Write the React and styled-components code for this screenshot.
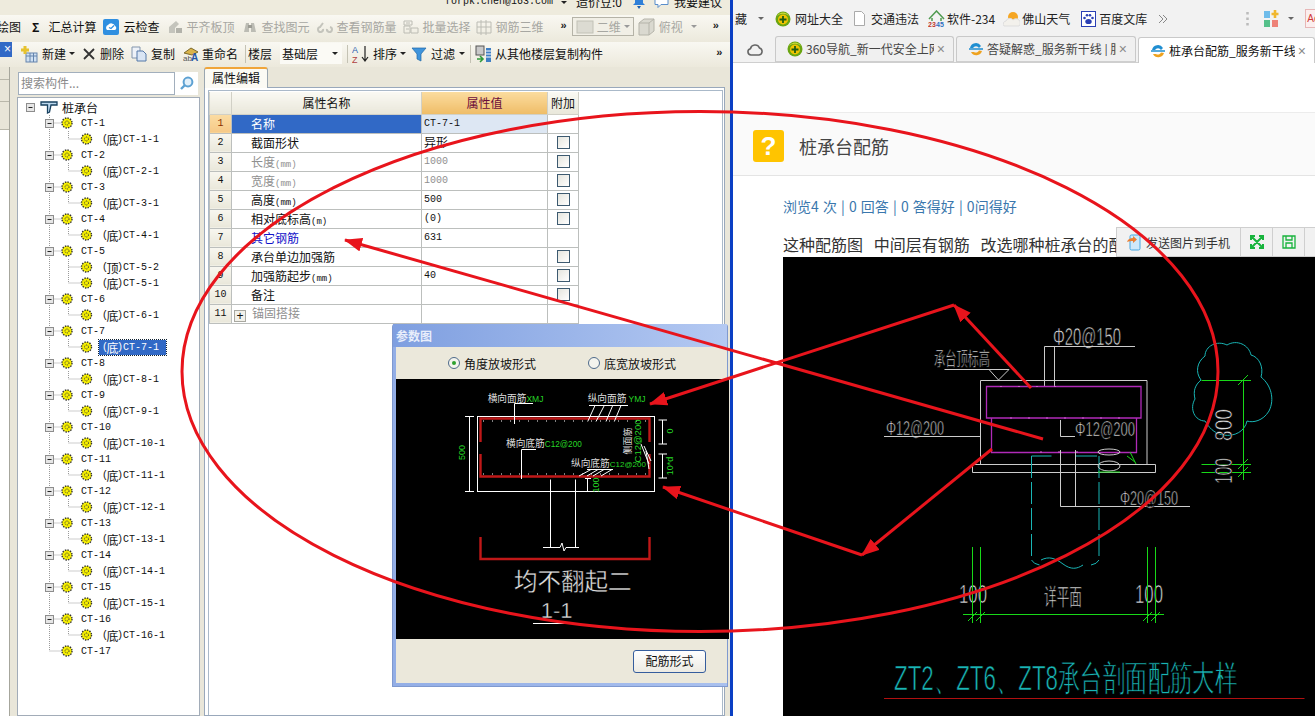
import React from "react";
import styled, { createGlobalStyle } from "styled-components";

const CJK = `"Noto Sans CJK SC", "Liberation Sans", sans-serif`;
const MONO = `"Liberation Mono", "Noto Sans CJK SC", monospace`;

const Global = createGlobalStyle`
  html, body { margin: 0; padding: 0; width: 1315px; height: 716px; overflow: hidden; background: #fff; }
  body { font-family: ${CJK}; font-size: 12px; color: #111; }
  * { box-sizing: border-box; }
`;

const Screen = styled.div`
  position: relative; display: flex; width: 1315px; height: 716px; overflow: hidden;
`;

/* ---------- left application ---------- */
const AppWin = styled.div`
  position: relative; width: 730px; flex: none; display: flex; flex-direction: column;
  background: #e9e6d9; overflow: hidden;
`;
const TopStrip = styled.div`
  height: 15px; flex: none; display: flex; align-items: center; padding: 0 0 11px 445px;
  background: #eeebdd; overflow: hidden; line-height: 12px; white-space: nowrap;
`;
const Mono = styled.span`
  font-family: ${MONO}; font-size: ${p => p.$size || 10}px; line-height: 1;
`;
const Bar = styled.div`
  display: flex; align-items: center; flex: none; white-space: nowrap; overflow: hidden;
  height: ${p => p.$h}px; padding-bottom: ${p => p.$pb || 0}px; background: linear-gradient(#f9f8f2, #ece9dc);
`;
const Item = styled.span`
  display: inline-flex; align-items: center; gap: ${p => p.$gap ?? 4}px; flex: none;
  margin-left: ${p => p.$ml || 0}px; line-height: 14px;
  color: ${p => (p.$off ? "#a7a7a2" : "#111")};
`;
const Sep = styled.span`
  width: 1px; height: 18px; flex: none; background: #c4c2b4; margin-left: ${p => p.$ml || 0}px;
`;
const Caret = styled.span`
  flex: none; width: 0; height: 0; margin-left: ${p => p.$ml || 0}px;
  border-left: 3px solid transparent; border-right: 3px solid transparent;
  border-top: 3px solid ${p => p.$c || "#222"};
`;
const Chevrons = styled.span`
  flex: none; margin-left: ${p => p.$ml || 0}px; font: bold 11px/12px "Liberation Sans", sans-serif;
  color: #222; margin-top: -4px;
`;
const ViewSelect = styled.span`
  flex: none; display: inline-flex; align-items: center; gap: 3px; width: 62px; height: 19px;
  margin-left: ${p => p.$ml}px; padding-left: 3px; border: 1px solid #b5b3a7; color: #a7a7a2;
  background: #f1efe6;
`;
const FloorSelect = styled.span`
  flex: none; display: inline-flex; align-items: center; justify-content: space-between;
  width: 62px; height: 21px; margin-left: ${p => p.$ml}px; padding: 0 4px 0 2px; background: #fbfaf5;
`;
const AppBody = styled.div`
  flex: 1; min-height: 0; display: flex;
`;
const Stub = styled.div`
  width: 10px; flex: none; display: flex; flex-direction: column; background: #fff;
  border-right: 1px solid #a6a69c;
`;
const CloseTab = styled.div`
  width: 12px; height: 15px; flex: none; align-self: flex-start; background: #3169c6; color: #fff;
  font: 12px/15px "Liberation Sans", sans-serif; text-align: right; padding-right: 1px; overflow: hidden;
`;
const StubTab = styled.div`
  height: ${p => p.$h}px; background: #e8e5d8; border-bottom: 1px solid #b9b7aa;
`;
const TreePane = styled.div`
  width: 183px; margin-left: 7px; flex: none; display: flex; flex-direction: column; gap: 2px; padding-top: 5px;
`;
const SearchRow = styled.div`
  height: 23px; flex: none; display: flex; margin-left: 1px; width: 180px; background: #fff;
`;
const SearchBox = styled.div`
  flex: 1; border: 1px solid #a2afbd; padding-left: 2px; color: #8a8a8a; font-size: 12px; line-height: 20px;
`;
const SearchBtn = styled.div`
  width: 23px; flex: none; display: flex; align-items: center; justify-content: center;
`;
const TreeBox = styled.div`
  flex: 1; background: #fff; border: 1px solid #a2acb8; padding-top: 1px; overflow: hidden;
`;
const TreeRow = styled.div`
  height: 16px; display: flex; align-items: center; white-space: nowrap; line-height: 16px;
`;
const TreeLabel = styled.span`
  display: inline-flex; align-items: center; height: 15px; padding: 1px ${p => (p.$sel ? 7 : 3)}px 0 3px;
  font-family: ${MONO}; font-size: 10px;
  color: ${p => (p.$sel ? "#fff" : "#111")};
  background: ${p => (p.$sel ? "#3169c6" : "transparent")};
  outline: ${p => (p.$sel ? "1px dotted #123" : "none")};
`;
const Zh = styled.span`
  font-family: ${CJK}; font-size: 12px; line-height: 15px;
`;
const TightZh = styled(Zh)`
  margin: -1px -1.5px 0;
`;
const RightPane = styled.div`
  flex: 1; min-width: 0; display: flex; flex-direction: column; padding: 0 5px 0 4px;
`;
const EditTab = styled.div`
  width: 64px; height: 21px; flex: none; margin-bottom: -1px; z-index: 1;
  border: 1px solid #9aa6b0; border-top: 2px solid #f0a53a; border-bottom: 0; border-radius: 3px 3px 0 0;
  background: #fbfaf4; text-align: center; line-height: 18px;
`;
const Panel = styled.div`
  flex: 1; background: #fff; border: 1px solid #99a8bb; padding: 2px 1px 0 3px;
`;
const InnerFrame = styled.div`
  height: 100%; border: 1px solid #aab9c9; border-bottom: 0; padding-top: 1px;
`;
const PropTable = styled.table`
  border-collapse: collapse; table-layout: fixed; width: 369px;
`;
const Th = styled.th`
  height: 22px; padding: 0; font-weight: 400; font-size: 12px; line-height: 15px; text-align: center;
  width: ${p => p.$w}px; border: 1px solid #d1d0c6; border-top: 0;
  color: ${p => (p.$hot ? "#6b0d3a" : "#111")};
  background: ${p => (p.$hot ? "linear-gradient(#fbdc9f, #efbd68)" : "linear-gradient(#faf9f3, #e9e7da)")};
`;
const Td = styled.td`
  height: 19px; padding: 0; border: 1px solid #bcbfbd; overflow: hidden; white-space: nowrap; line-height: 15px;
`;
const NumCell = styled(Td)`
  text-align: center; font-family: ${MONO}; font-size: 10px;
  color: ${p => (p.$sel ? "#8a3000" : "#111")};
  background: ${p => (p.$sel ? "linear-gradient(#fbdca3, #f6c987)" : "linear-gradient(#f8f7f0, #e9e7da)")};
`;
const NameCell = styled(Td)`
  padding-left: ${p => (p.$plus ? 2 : 19)}px;
  color: ${p => p.$c};
  background: ${p => (p.$sel ? "#3169c6" : "#fff")};
`;
const ValCell = styled(Td)`
  padding-left: 2px; font-family: ${MONO}; font-size: 10px; color: ${p => p.$c};
  background: ${p => (p.$sel ? "#dde7f3" : "#fff")};
`;
const ExtraCell = styled(Td)`
  line-height: 0;
`;
const Check = styled.span`
  display: block; width: 13px; height: 13px; margin: 0 auto 0 9px;
  border: 1px solid #3d5a70; background: linear-gradient(135deg, #e5e5de, #fff);
`;
const PlusBox = styled.span`
  display: inline-flex; align-items: center; justify-content: center; width: 12px; height: 12px;
  margin-right: 6px; vertical-align: -2px; border: 1px solid #a8a8a0; background: #f2f1ea;
  color: #111; font: 12px/10px "Liberation Sans", sans-serif;
`;

/* ---------- dialog ---------- */
const Dialog = styled.div`
  position: absolute; left: 392px; top: 324px; width: 336px; height: 363px; display: flex;
  flex-direction: column; padding: 0 0 3px 3px; border-radius: 3px 3px 0 0;
  background: linear-gradient(90deg, #93aee6, #a9c0ee); border: 1px solid #7f99cf; border-top: 0;
`;
const DialogTitle = styled.div`
  height: 23px; flex: none; padding-top: 3px; color: #e8eefb; font-weight: 700; font-size: 12px; line-height: 18px;
  background: linear-gradient(90deg, #7f9fe0, #b4c9f2); margin: 0 0 0 -3px; padding-left: 3px;
`;
const RadioRow = styled.div`
  height: 32px; flex: none; display: flex; align-items: center; background: #ebe8db;
`;
const Radio = styled.span`
  display: inline-flex; align-items: center; gap: 4px; margin-left: ${p => p.$ml}px;
`;
const RadioDot = styled.span`
  width: 12px; height: 12px; border-radius: 50%; border: 1px solid #4e6a8a; display: flex;
  align-items: center; justify-content: center; background: #f4f4ee;
  &::after { content: ""; width: 4px; height: 4px; border-radius: 50%; background: ${p => (p.$on ? "#2fa12f" : "transparent")}; }
`;
const DrawingBlack = styled.svg`
  display: block; flex: none; width: 333px; height: 260px; background: #000;
`;
const DialogFoot = styled.div`
  flex: 1; display: flex; justify-content: flex-end; align-items: flex-start; background: #ebe8db;
  padding: 11px 21px 0 0;
`;
const DialogBtn = styled.div`
  width: 73px; height: 23px; border: 1px solid #355d9d; border-radius: 3px; text-align: center; line-height: 20px;
  background: linear-gradient(#fff, #eceae2);
`;

const Divider = styled.div`
  width: 3px; flex: none; background: #0a3fc4;
`;

/* ---------- browser ---------- */
const Browser = styled.div`
  flex: 1; min-width: 0; display: flex; flex-direction: column; background: #fff; overflow: hidden;
`;
const BookBar = styled.div`
  height: 37px; flex: none; display: flex; align-items: center; background: #f2f2f2; white-space: nowrap;
  overflow: hidden;
`;
const Book = styled.span`
  flex: none; display: inline-flex; align-items: center; gap: ${p => p.$gap ?? 3}px; margin-left: ${p => p.$ml || 0}px;
  color: #222; font-size: 12px; line-height: 14px;
`;
const AdBox = styled.span`
  flex: none; width: 14px; height: 19px; margin-left: ${p => p.$ml}px; overflow: hidden;
  border: 1px solid #e7b7b7; color: #cf3a3a; font: 10px/17px "Liberation Sans", sans-serif; padding-left: 1px; background: #fbeeee;
`;
const TabBar = styled.div`
  height: 26px; flex: none; display: flex; align-items: flex-end; background: #f2f2f2;
  border-bottom: 1px solid #cfcfcf;
`;
const CloudSlot = styled.div`
  width: 42px; flex: none; height: 26px; display: flex; align-items: center; padding-left: 14px;
`;
const Tab = styled.div`
  width: ${p => p.$w}px; height: 26px; flex: none; display: flex; align-items: center; gap: 3px; padding: 0 8px 0 11px;
  margin-right: 2px; margin-bottom: ${p => (p.$active ? -1 : 0)}px;
  border: 1px solid #c9c9c9; border-bottom: ${p => (p.$active ? "0" : "1px solid #cfcfcf")};
  border-radius: 3px 3px 0 0; background: ${p => (p.$active ? "#fff" : "#f0f0f0")};
  color: ${p => (p.$active ? "#111" : "#444")};
`;
const TabText = styled.span`
  flex: 1; min-width: 0; overflow: hidden; white-space: nowrap; line-height: 14px;
`;
const TabClose = styled.span`
  flex: none; color: #8a8a8a; font: 14px/14px "Liberation Sans", sans-serif;
`;
const PageTop = styled.div`
  height: 49px; flex: none;
`;
const QuestionBar = styled.div`
  height: 64px; flex: none; display: flex; align-items: center; gap: 15px; padding: 3px 0 0 20px;
  background: #fafafa; border-top: 1px solid #ececec; border-bottom: 1px solid #e4e4e4;
`;
const QMark = styled.div`
  width: 31px; height: 32px; border-radius: 3px; background: #ffc400; color: #fff; text-align: center;
  font: 700 26px/32px "Liberation Sans", sans-serif;
`;
const QTitle = styled.div`
  font-size: 18px; line-height: 24px; color: #444;
`;
const Article = styled.div`
  position: relative; flex: 1; min-height: 0; display: flex; flex-direction: column; padding-left: 50px;
`;
const Stats = styled.div`
  height: 22px; flex: none; margin-top: 19px; font-size: 14px; line-height: 22px; color: #3a77ad; white-space: nowrap;
  word-spacing: 1px;
`;
const Intro = styled.div`
  height: 24px; flex: none; margin-top: 16px; font-size: 16px; line-height: 22px; color: #333; white-space: nowrap; overflow: hidden;
`;
const CadImage = styled.svg`
  display: block; flex: none; width: 532px; height: 459px; background: #000;
`;
const SendBar = styled.div`
  position: absolute; left: 383px; top: 51px; width: 205px; height: 30px; display: flex; align-items: center;
  background: #f1f1f1; border: 1px solid #cfcfcf; white-space: nowrap;
`;
const SendCell = styled.div`
  height: 100%; flex: none; width: ${p => p.$w}px; display: flex; align-items: center; justify-content: center; gap: 5px;
  border-right: 1px solid #cfcfcf; color: #333; font-size: 12px;
`;

/* ---------- overlay + svg text ---------- */
const Ink = styled.svg`
  position: absolute; left: 0; top: 0; width: 1315px; height: 716px; pointer-events: none; z-index: 5;
`;
const CadText = styled.text`
  font-family: ${p => (p.$cjk ? CJK : `"Liberation Sans", sans-serif`)};
  fill: ${p => p.$c || "#ddd"}; font-size: ${p => p.$s}px;
  stroke: ${p => (p.$thin ? "#000" : "none")}; stroke-width: ${p => p.$thin || 0}px;
`;

/* ---------- icons ---------- */
const Svg = ({ w = 16, h = 16, vb, children }) => (
  <svg width={w} height={h} viewBox={vb || `0 0 ${w} ${h}`} style={{ flex: "none", display: "block" }}>{children}</svg>
);
const CloudCheck = () => (
  <Svg w={16} h={16}>
    <rect width="16" height="16" rx="2" fill="#2f8fe0" />
    <path d="M4 11a3 3 0 0 1 1-5 4 4 0 0 1 7 1 2.2 2.2 0 0 1 0 4z" fill="#fff" />
    <path d="M6 8.5l2 1 3-3" fill="none" stroke="#2f8fe0" strokeWidth="1.2" />
  </Svg>
);
const GrayAlign = () => (
  <Svg><path d="M2 14V8l7-6 3 3-4 4v5z" fill="#c4c4bc" /><path d="M9 9h6v5H9z" fill="#b2b2aa" /></Svg>
);
const GrayBino = () => (
  <Svg><path d="M2 13l2-9h3v9zM9 13V4h3l2 9z" fill="#bcbcb4" /><rect x="6" y="6" width="4" height="3" fill="#9c9c94" /></Svg>
);
const GrayLink = () => (
  <Svg><path d="M6 10a2.5 2.5 0 1 1-3-2l3-4M10 10a2.5 2.5 0 1 0 3-2" fill="none" stroke="#c4c4bc" strokeWidth="2" /></Svg>
);
const GrayBatch = () => (
  <Svg><path d="M1 2h8v4H1zM1 7h6v7H1zM8 9h7v5H8z" fill="none" stroke="#bcbcb4" /><path d="M3 4h4M3 10h3" stroke="#bcbcb4" /></Svg>
);
const GrayGrid = () => (
  <Svg><path d="M1 3h14v11H1zM5 1v15M10 1v15M1 8h14" fill="none" stroke="#bcbcb4" /></Svg>
);
const GrayCube = () => (
  <Svg w={17} h={19}><path d="M1 6l5-4h10v12l-5 4H1z" fill="#dad9d0" stroke="#b5b4aa" /><path d="M1 6h10v12M11 6l5-4" fill="none" stroke="#b5b4aa" /></Svg>
);
const Flat = () => (
  <Svg w={18} h={14}><rect x="1" y="1" width="16" height="12" fill="#dcdbd2" stroke="#c2c1b6" /></Svg>
);
const NewIcon = () => (
  <Svg w={18} h={18}>
    <rect x="6" y="8" width="11" height="9" fill="#cfe0f2" stroke="#6484ad" />
    <path d="M6 11h11M10 8v9M13.5 8v9" stroke="#6484ad" />
    <path d="M5 1v8M1 5h8" stroke="#e6c22f" strokeWidth="3" />
  </Svg>
);
const CrossIcon = () => (
  <Svg w={12} h={12}><path d="M1 1l10 10M11 1L1 11" stroke="#333" strokeWidth="1.8" /></Svg>
);
const CopyIcon = () => (
  <Svg><path d="M1 1h8v11H1z" fill="#eef2f8" stroke="#8295ad" /><path d="M6 5h6l3 3v7H6z" fill="#d9e5f4" stroke="#5578a8" /></Svg>
);
const RenameIcon = () => (
  <Svg w={17} h={16}>
    <path d="M1 7l7-5 7 4-6 3z" fill="#d9b34a" stroke="#7d6a2c" />
    <text x="0" y="15" fontSize="8" fontFamily="Liberation Sans" fill="#555">ab</text>
    <text x="8" y="15" fontSize="10" fontWeight="700" fontFamily="Liberation Sans" fill="#2456a5">A</text>
  </Svg>
);
const SortIcon = () => (
  <Svg w={20} h={20}>
    <text x="0" y="9" fontSize="9" fontFamily="Liberation Sans" fill="#2b5fb0">A</text>
    <text x="0" y="19" fontSize="9" fontFamily="Liberation Sans" fill="#b04040">Z</text>
    <path d="M13 2v15M10 13l3 4 3-4" fill="none" stroke="#222" strokeWidth="1.2" />
  </Svg>
);
const FunnelIcon = () => (
  <Svg><path d="M1 2h14L10 8v7l-4-2V8z" fill="#3f94dc" stroke="#1f68a8" strokeWidth=".7" /></Svg>
);
const CopyFloorIcon = () => (
  <Svg w={17} h={18}>
    <rect x="1" y="1" width="8" height="9" fill="#c9c9c9" stroke="#555" />
    <path d="M11 3h5v14h-5z" fill="#3f7fc4" /><path d="M11 6h5M11 9h5M11 12h5" stroke="#fff" />
    <path d="M2 14h5M5 11l3 3-3 3" fill="none" stroke="#2f9a3a" strokeWidth="1.6" />
  </Svg>
);
const Bell = () => (
  <Svg w={14} h={13}><path d="M7 0a4 4 0 0 0-4 4v3L1 9h12l-2-2V4a4 4 0 0 0-4-4z" fill="#2f7fd8" /><path d="M5 10h4l-2 3z" fill="#1d5fb0" /></Svg>
);
const Bubble = () => (
  <Svg w={15} h={13}><path d="M1 .5h13v8H7l-3 3v-3H1z" fill="#fff" stroke="#5a8ecb" /></Svg>
);
const Magnifier = () => (
  <Svg w={15} h={15}><circle cx="9" cy="6" r="4.4" fill="#e2f0fa" stroke="#5da1d2" strokeWidth="2" /><path d="M6 9l-4 4" stroke="#5da1d2" strokeWidth="2.4" /></Svg>
);
const Q360 = () => (
  <Svg>
    <circle cx="8" cy="8" r="7.5" fill="#6aa511" />
    <path d="M2 5a7 7 0 0 1 12 0A9 9 0 0 0 2 5z" fill="#c9d93b" />
    <circle cx="8" cy="8.5" r="5" fill="#f0c400" />
    <path d="M8 5v7M4.5 8.5h7" stroke="#1f5d10" strokeWidth="1.8" />
  </Svg>
);
const DocIcon = () => (
  <Svg w={11} h={15}><path d="M.5.5h7l3 3v11H.5z" fill="#fff" stroke="#aaa" /></Svg>
);
const HouseIcon = () => (
  <Svg w={17} h={18}>
    <path d="M1 9l7.5-8L16 9M4 8v3M13 8v3" fill="none" stroke="#4f9a4f" strokeWidth="1.5" />
    <text x="0" y="17" fontSize="7" fontWeight="700" fontFamily="Liberation Sans" fill="#c0392b">23</text>
    <text x="8" y="17" fontSize="7" fontWeight="700" fontFamily="Liberation Sans" fill="#2f6fc0">45</text>
  </Svg>
);
const WeatherIcon = () => (
  <Svg w={17} h={16}>
    <circle cx="10" cy="6" r="5" fill="#f5a623" />
    <path d="M1 15a3 3 0 0 1 2-5 4 4 0 0 1 7-1 3 3 0 0 1 6 6z" fill="#f3f1ec" stroke="#ddd" />
  </Svg>
);
const PawIcon = () => (
  <Svg w={15} h={16}>
    <rect x=".5" y=".5" width="14" height="15" fill="#fff" stroke="#2a3fb4" />
    <ellipse cx="7.5" cy="10.5" rx="3.2" ry="2.6" fill="#2a3fb4" />
    <circle cx="3.5" cy="7" r="1.3" fill="#2a3fb4" /><circle cx="11.5" cy="7" r="1.3" fill="#2a3fb4" />
    <circle cx="6" cy="4.2" r="1.3" fill="#2a3fb4" /><circle cx="9" cy="4.2" r="1.3" fill="#2a3fb4" />
  </Svg>
);
const AppsIcon = () => (
  <Svg w={15} h={18}>
    <rect x="0" y="1" width="6" height="7" fill="#6fbcea" /><path d="M11 0v8M7.5 4h7" stroke="#f0b72f" strokeWidth="2.6" />
    <rect x="0" y="10" width="6" height="7" fill="#55c08a" /><rect x="8" y="10" width="6" height="7" fill="#ee8278" />
  </Svg>
);
const MoreChevrons = () => (
  <Svg w={10} h={10}><path d="M1 1l4 4-4 4M5 1l4 4-4 4" fill="none" stroke="#888" /></Svg>
);
const CloudOutline = () => (
  <Svg w={16} h={14}><path d="M4 13a3.2 3.2 0 0 1-.6-6.3A4.8 4.8 0 0 1 12.5 6 3.6 3.6 0 0 1 12 13z" fill="none" stroke="#666" strokeWidth="1.6" /></Svg>
);
const EIcon = () => (
  <Svg w={16} h={16}>
    <path d="M2 7a6 6 0 0 1 11-2L11 7a3.5 3.5 0 0 0-6 0z" fill="#1f8ed1" />
    <path d="M1 8h14" stroke="#1f8ed1" strokeWidth="1.5" />
    <path d="M3 11a6 6 0 0 0 11-1l-3-.4A3.5 3.5 0 0 1 6 11z" fill="#eea21f" />
  </Svg>
);
const SendIcon = () => (
  <Svg w={14} h={17}>
    <rect x="3" y="1" width="10" height="15" rx="1.5" fill="#cfe9fa" stroke="#45a6e0" />
    <path d="M0 8c1-3 3-4 6-4V2l4 3.500-4 3.500V7C4 7 2 7 0 8z" fill="#ea7f33" />
  </Svg>
);
const ExpandIcon = () => (
  <Svg w={14} h={14}><path d="M2 2l10 10M12 2L2 12M1 5V1h4M9 1h4v4M13 9v4H9M5 13H1V9" fill="none" stroke="#17b33c" strokeWidth="2" /></Svg>
);
const SaveIcon = () => (
  <Svg w={14} h={14}><path d="M1 1h12v12H1zM4 1v4h6V1M4 13V8h6v5" fill="none" stroke="#17b33c" strokeWidth="1.3" /></Svg>
);

const Gear = ({ x }) => (
  <g>
    <circle cx={x} cy="8" r="5" fill="#f5ee00" stroke="#333" strokeWidth="1.4" strokeDasharray="1.4 1.2" />
    <circle cx={x} cy="8" r="2" fill="none" stroke="#333" strokeWidth="1" strokeDasharray="1 1" />
  </g>
);
const Expander = ({ x, y = 4 }) => (
  <g>
    <rect x={x + 0.5} y={y + 0.5} width="8" height="8" fill="#e6e6e6" stroke="#8d8d8d" />
    <path d={`M${x + 2.5} ${y + 4.5}h4`} stroke="#222" />
  </g>
);
const dotted = { stroke: "#9a9a9a", strokeDasharray: "1 1", fill: "none" };

const TreeGlyph = ({ level, more, lastTop, expander }) => {
  const w = level === 0 ? 41 : level === 1 ? 60 : 81;
  return (
    <svg width={w} height="16" viewBox={`18 0 ${w} 16`} style={{ flex: "none", display: "block" }}>
      {level === 0 && (
        <g>
          <Expander x={26} />
          <path d="M41 3h16v3H51l-1.500 7-2 1V6H41z" fill="#bcd8ee" stroke="#17405f" strokeWidth="1.300" />
        </g>
      )}
      {level === 1 && (
        <g>
          <path d={`M49.500 0V${lastTop ? 8 : 16}M49.500 8H62`} {...dotted} />
          {expander && <Expander x={45} />}
          <Gear x={67} />
        </g>
      )}
      {level === 2 && (
        <g>
          <path d="M49.500 0V16" {...dotted} />
          <path d={`M68.500 0V${more ? 16 : 8}M68.500 8H81`} {...dotted} />
          <Gear x={86.5} />
        </g>
      )}
    </svg>
  );
};

const treeData = Array.from({ length: 17 }, (_, i) => {
  const n = i + 1;
  let kids = [`(底)CT-${n}-1`];
  if (n === 5) kids = ["(顶)CT-5-2", "(底)CT-5-1"];
  if (n === 17) kids = [];
  return { name: `CT-${n}`, kids };
});

const rows = [
  { n: 1, name: "名称", val: "CT-7-1", sel: true, c: "#fff" },
  { n: 2, name: "截面形状", val: <Zh>异形</Zh>, check: true },
  { n: 3, name: "长度", unit: "(mm)", val: "1000", check: true, c: "#8f8f8f" },
  { n: 4, name: "宽度", unit: "(mm)", val: "1000", check: true, c: "#8f8f8f" },
  { n: 5, name: "高度", unit: "(mm)", val: "500", check: true },
  { n: 6, name: "相对底标高", unit: "(m)", val: " (0)", check: true },
  { n: 7, name: "其它钢筋", val: "631", c: "#1212c8", valC: "#111" },
  { n: 8, name: "承台单边加强筋", val: "", check: true },
  { n: 9, name: "加强筋起步", unit: "(mm)", val: "40", check: true },
  { n: 10, name: "备注", val: "", check: true },
  { n: 11, name: "锚固搭接", val: "", plus: true, c: "#8f8f8f" },
];

const G = "#26d626";

const DialogDrawing = () => (
  <DrawingBlack viewBox="395 380 333 260">
    <rect x="476.500" y="417.500" width="177" height="75" fill="none" stroke="#fff" />
    <path d="M479.500 443V419.500H648.500V443M479.500 455V477.500H648.500V455" fill="none" stroke="#c01818" strokeWidth="2.400" />
    <path d="M482 422H646M482 475H646" stroke="#fff" strokeDasharray="1 8" />
    <path d="M549.500 480.500V548M574.500 480.500V548M542 548.500H559L561 544L563 552L565 548.500H578" fill="none" stroke="#fff" />
    <path d="M479.500 538V560H648.500V538" fill="none" stroke="#c01818" strokeWidth="2.400" />
    <CadText $cjk $s={23.500} $thin={0.3} x="571.700" y="591" textAnchor="middle">均不翻起二</CadText>
    <CadText $s={22} $thin={0.4} x="555.700" y="619" textAnchor="middle">1-1</CadText>
    <path d="M532 624.500H570" stroke="#fff" />
    <CadText $cjk $s={9.700} x="486.700" y="402.700">横向面筋<tspan fill={G} fontSize="8.500" fontFamily="Liberation Sans">XMJ</tspan></CadText>
    <path d="M513.500 404.500H532M513.500 404.500V425" stroke="#fff" fill="none" />
    <CadText $cjk $s={9.700} x="586.700" y="402.700">纵向面筋 <tspan fill={G} fontSize="8.500" fontFamily="Liberation Sans">YMJ</tspan></CadText>
    <path d="M588 406.500H627M594 406.500L586.700 422.500M603.300 406.500L595 422.500M611.700 406.500L605 422.500M620 406.500L613.300 422.500" stroke="#fff" fill="none" />
    <CadText $s={9} $c={G} textAnchor="middle" transform="translate(464,453.500) rotate(-90)">500</CadText>
    <path d="M468.500 417.500V492.500M464 417.500H473M464 492.500H473" stroke="#fff" fill="none" />
    <CadText $cjk $s={9.700} x="505" y="448.300">横向底筋<tspan fill={G} fontSize="8.200" fontFamily="Liberation Sans">C12@200</tspan></CadText>
    <path d="M520.500 450.500H535M520.500 450.500V480" stroke="#fff" fill="none" />
    <CadText $cjk $s={9.700} x="570" y="468.300">纵向底筋<tspan fill={G} fontSize="8" fontFamily="Liberation Sans">C12@200</tspan></CadText>
    <path d="M586 470.500H612M590 470.500L578 477M597 470.500L586 477M603 470.500L592 477M611 470.500L600 477" stroke="#fff" fill="none" />
    <CadText $s={9} $c={G} textAnchor="middle" transform="translate(598,486) rotate(-90)">100</CadText>
    <path d="M586.500 479V492.500M584 479.500H590M584 492.500H590" stroke="#fff" fill="none" />
    <CadText $cjk $s={9} textAnchor="middle" transform="translate(630,442) rotate(-90)">侧面筋</CadText>
    <CadText $s={9.500} $c={G} textAnchor="middle" transform="translate(640,442) rotate(-90)">C12@200</CadText>
    <path d="M640 445L648 465M643 447L650 462M645 452L648 470" stroke="#fff" fill="none" />
    <path d="M661.500 421V445M657.500 421H666M657.500 445H666M661.500 455V479M657.500 455H666M657.500 479H666" stroke="#fff" fill="none" />
    <CadText $s={9} $c={G} textAnchor="middle" transform="translate(672,432) rotate(-90)">0</CadText>
    <CadText $s={9} $c={G} textAnchor="middle" transform="translate(672,467) rotate(-90)">10*d</CadText>
  </DrawingBlack>
);

const T = ({ x, y, w, s = 22, c, children, rot, cjk }) =>
  rot ? (
    <CadText $s={s} $c={c} $cjk={cjk} $thin={0.7} transform={`translate(${x},${y}) rotate(-90)`} textLength={w} lengthAdjust="spacingAndGlyphs">{children}</CadText>
  ) : (
    <CadText $s={s} $c={c} $cjk={cjk} $thin={0.7} x={x} y={y} textLength={w} lengthAdjust="spacingAndGlyphs">{children}</CadText>
  );

const CY = "#19b5b5";
const GRN = "#18d818";
const PU = "#b02ab8";

const CadDrawing = () => (
  <CadImage viewBox="783 257 532 459">
    <T x={1053} y={345} w={68} s={23}>Φ20@150</T>
    <path d="M1135 346.500H1044.500V386M1054.500 346.500V386" stroke="#ccc" fill="none" />
    <T x={934} y={366} w={56} s={19} cjk>承台顶标高</T>
    <path d="M944.500 369.500H1009L998.500 380L989 369.500" stroke="#ccc" fill="none" />
    <path d="M980.500 380.500H1147V464M980.500 380.500V464" stroke="#ccc" fill="none" />
    <path d="M972.500 464.500H1155.500V472.500H972.500Z" stroke="#ccc" fill="none" />
    <path d="M986.500 386.500H1141V418H986.500ZM991.500 418V452.500H1136.500V418" stroke={PU} strokeWidth="1.300" fill="none" />
    <path d="M1000 386.500h70M1010 418h120M1040 452h40" stroke="#d060d0" strokeDasharray="2 16" />
    <T x={886} y={435} w={58} s={21}>Φ12@200</T>
    <path d="M884 436.500H981" stroke="#ccc" />
    <T x={1075} y={436} w={60} s={21}>Φ12@200</T>
    <path d="M1060.500 420V436.500H1075" stroke="#ccc" fill="none" />
    <path d="M1031.500 456h20M1075 456h24M1031.500 456V560q2 4 8 5M1099 456V560q-2 4-8 5" stroke={CY} strokeDasharray="22 4" fill="none" />
    <path d="M1041 560c8-4 14-2 22 4s14 5 20 1" stroke={CY} fill="none" />
    <path d="M1060.500 450V506.500H1190M1075.500 450V506.500" stroke="#ccc" fill="none" />
    <T x={1120} y={505} w={58} s={21}>Φ20@150</T>
    <ellipse cx="1109" cy="452" rx="11" ry="3" fill="none" stroke="#ccc" />
    <ellipse cx="1109" cy="466" rx="11" ry="5" fill="none" stroke="#ccc" />
    <path d="M1098 472h22M1130 452l6 12M1127 456l8 6" stroke={GRN} fill="none" />
    <T x={959} y={603} w={28} s={26}>100</T>
    <T x={1135} y={603} w={28} s={26}>100</T>
    <T x={1044} y={605} w={38} s={23} cjk>详平面</T>
    <path d="M963 614.500H1164M972.500 547V623M980.500 547V623M1147.500 547V623M1155.500 547V623" stroke={GRN} fill="none" />
    <path d="M968 621l9-9M976 621l9-9M1143 621l9-9M1151 621l9-9" stroke={GRN} fill="none" />
    <T x={894} y={690} w={343} s={35} c={CY}>ZT2、ZT6、ZT8承台剖面配筋大样</T>
    <path d="M884 698.500H1304.500" stroke="#b01010" />
    <path d="M1201 380c-6-8-4-18 4-24 0-10 12-16 22-11 10-6 22 0 24 10 8 2 13 12 10 22 10 8 14 22 8 34-6 10-16 12-22 10-2 10-12 16-24 14-10-2-14-8-18-14-10 0-16-12-10-22-2-8 0-14 6-19z" fill="none" stroke={CY} />
    <path d="M1201.500 380.500H1251M1201.500 464.500H1251M1201.500 472.500H1251M1243.500 380V480" stroke={GRN} fill="none" />
    <path d="M1238 385l10-10M1238 469l10-10M1238 477l10-10" stroke={GRN} fill="none" />
    <T x={1232} y={441} w={32} s={24} rot>800</T>
    <T x={1232} y={484} w={26} s={24} rot>100</T>
  </CadImage>
);

export default function App() {
  return (
    <Screen>
      <Global />
      <AppWin>
        <TopStrip>
          <Mono $size={10}>forpk.chen@163.com</Mono>
          <Caret $ml={8} />
          <Item $ml={9}>造价豆:0</Item>
          <Item $ml={10}><Bell /></Item>
          <Item $ml={8}><Bubble /></Item>
          <Item $ml={5}>我要建议</Item>
        </TopStrip>
        <Bar $h={27} $pb={4}>
          <Item $ml={-3}>绘图</Item>
          <Item $ml={11} $gap={9}><b>Σ</b>汇总计算</Item>
          <Item $ml={7}><CloudCheck />云检查</Item>
          <Item $ml={8} $gap={3} $off><GrayAlign />平齐板顶</Item>
          <Item $ml={7} $off><GrayBino />查找图元</Item>
          <Item $ml={7} $off><GrayLink />查看钢筋量</Item>
          <Item $ml={6} $off><GrayBatch />批量选择</Item>
          <Item $ml={5} $off><GrayGrid />钢筋三维</Item>
          <Chevrons $ml={17}>»</Chevrons>
          <ViewSelect $ml={5}><Flat />二维<Caret $c="#999" /></ViewSelect>
          <Item $ml={4} $off><GrayCube />俯视</Item>
          <Caret $ml={8} $c="#999" />
          <Chevrons $ml={16}>»</Chevrons>
        </Bar>
        <Bar $h={25} $pb={2}>
          <CloseTab>×</CloseTab>
          <Item $ml={8}><NewIcon />新建</Item>
          <Caret $ml={3} />
          <Item $ml={8} $gap={5}><CrossIcon />删除</Item>
          <Item $ml={7} $gap={4}><CopyIcon />复制</Item>
          <Item $ml={8} $gap={2}><RenameIcon />重命名</Item>
          <Sep $ml={7} />
          <Item $ml={2}>楼层</Item>
          <FloorSelect $ml={8}>基础层<Caret /></FloorSelect>
          <Sep $ml={5} />
          <Item $ml={4} $gap={1}><SortIcon />排序</Item>
          <Caret $ml={3} />
          <Item $ml={5}><FunnelIcon />过滤</Item>
          <Caret $ml={4} />
          <Sep $ml={5} />
          <Item $ml={4} $gap={3}><CopyFloorIcon />从其他楼层复制构件</Item>
          <Chevrons $ml={113}>»</Chevrons>
        </Bar>
        <AppBody>
          <Stub>
            <StubTab $h={13} /><StubTab $h={22} /><StubTab $h={28} />
          </Stub>
          <TreePane>
            <SearchRow>
              <SearchBox>搜索构件...</SearchBox>
              <SearchBtn><Magnifier /></SearchBtn>
            </SearchRow>
            <TreeBox>
              <TreeRow>
                <TreeGlyph level={0} />
                <TreeLabel><Zh>桩承台</Zh></TreeLabel>
              </TreeRow>
              {treeData.map(t => (
                <React.Fragment key={t.name}>
                  <TreeRow>
                    <TreeGlyph level={1} expander={t.kids.length > 0} lastTop={t.kids.length === 0} />
                    <TreeLabel>{t.name}</TreeLabel>
                  </TreeRow>
                  {t.kids.map((k, i) => (
                    <TreeRow key={k}>
                      <TreeGlyph level={2} more={i < t.kids.length - 1} />
                      <TreeLabel $sel={k === "(底)CT-7-1"}>
                        ({<TightZh>{k[1]}</TightZh>}){k.slice(3)}
                      </TreeLabel>
                    </TreeRow>
                  ))}
                </React.Fragment>
              ))}
            </TreeBox>
          </TreePane>
          <RightPane>
            <EditTab>属性编辑</EditTab>
            <Panel>
              <InnerFrame>
                <PropTable>
                  <thead>
                    <tr>
                      <Th $w={22} />
                      <Th $w={190}>属性名称</Th>
                      <Th $w={126} $hot>属性值</Th>
                      <Th $w={31}>附加</Th>
                    </tr>
                  </thead>
                  <tbody>
                    {rows.map(r => (
                      <tr key={r.n}>
                        <NumCell $sel={r.sel}>{r.n}</NumCell>
                        <NameCell $sel={r.sel} $plus={r.plus} $c={r.c || "#111"}>
                          {r.plus && <PlusBox>+</PlusBox>}
                          {r.name}
                          {r.unit && <Mono $size={9}>{r.unit}</Mono>}
                        </NameCell>
                        <ValCell $sel={r.sel} $c={r.valC || (r.c === "#8f8f8f" ? "#8f8f8f" : "#111")}>{r.val}</ValCell>
                        <ExtraCell>{r.check && <Check />}</ExtraCell>
                      </tr>
                    ))}
                  </tbody>
                </PropTable>
              </InnerFrame>
            </Panel>
          </RightPane>
        </AppBody>
        <Dialog>
          <DialogTitle>参数图</DialogTitle>
          <RadioRow>
            <Radio $ml={52}><RadioDot $on />角度放坡形式</Radio>
            <Radio $ml={52}><RadioDot />底宽放坡形式</Radio>
          </RadioRow>
          <DialogDrawing />
          <DialogFoot><DialogBtn>配筋形式</DialogBtn></DialogFoot>
        </Dialog>
      </AppWin>
      <Divider />
      <Browser>
        <BookBar>
          <Book $ml={2}>藏</Book>
          <Caret $ml={11} $c="#666" />
          <Book $ml={11} $gap={4}><Q360 />网址大全</Book>
          <Book $ml={11} $gap={6}><DocIcon />交通违法</Book>
          <Book $ml={9} $gap={2}><HouseIcon />软件-234</Book>
          <Book $ml={8} $gap={2}><WeatherIcon />佛山天气</Book>
          <Book $ml={11} $gap={3}><PawIcon />百度文库</Book>
          <Book $ml={11}><MoreChevrons /></Book>
          <Book $ml={78}><Svg w={3} h={16}><path d="M1.500 1v14" stroke="#bbb" strokeWidth="2.500" strokeDasharray="2.500 3" /></Svg></Book>
          <Book $ml={15}><AppsIcon /></Book>
          <Caret $ml={9} $c="#666" />
          <AdBox $ml={11}>Ad</AdBox>
        </BookBar>
        <TabBar>
          <CloudSlot><CloudOutline /></CloudSlot>
          <Tab $w={179}><Q360 /><TabText>360导航_新一代安全上网</TabText><TabClose>×</TabClose></Tab>
          <Tab $w={180}><EIcon /><TabText>答疑解惑_服务新干线 | 服务</TabText><TabClose>×</TabClose></Tab>
          <Tab $w={177} $active><EIcon /><TabText>桩承台配筋_服务新干线</TabText><TabClose>×</TabClose></Tab>
        </TabBar>
        <PageTop />
        <QuestionBar>
          <QMark>?</QMark>
          <QTitle>桩承台配筋</QTitle>
        </QuestionBar>
        <Article>
          <Stats>浏览4 次 | 0 回答 | 0 答得好 | 0问得好</Stats>
          <Intro>这种配筋图&nbsp;&nbsp;&nbsp;中间层有钢筋&nbsp;&nbsp;&nbsp;改选哪种桩承台的配</Intro>
          <CadDrawing />
          <SendBar>
            <SendCell $w={124}><SendIcon />发送图片到手机</SendCell>
            <SendCell $w={32}><ExpandIcon /></SendCell>
            <SendCell $w={32}><SaveIcon /></SendCell>
          </SendBar>
        </Article>
      </Browser>
      <Ink viewBox="0 0 1315 716">
        <defs>
          <marker id="ah" markerUnits="userSpaceOnUse" markerWidth="18" markerHeight="14" refX="17" refY="7" orient="auto">
            <path d="M0 0L18 7L0 14Z" fill="#e8141c" />
          </marker>
        </defs>
        <ellipse cx="700" cy="371.500" rx="518" ry="260" fill="none" stroke="#e8141c" strokeWidth="3" />
        <g fill="none" stroke="#e8141c" strokeWidth="3">
          <line x1="1043" y1="439" x2="345" y2="240" markerEnd="url(#ah)" />
          <line x1="1031" y1="388" x2="954" y2="305" markerEnd="url(#ah)" />
          <line x1="954" y1="305" x2="650" y2="404" markerEnd="url(#ah)" />
          <line x1="992" y1="449" x2="862" y2="555" markerEnd="url(#ah)" />
          <line x1="862" y1="555" x2="663" y2="487" markerEnd="url(#ah)" />
        </g>
      </Ink>
    </Screen>
  );
}
